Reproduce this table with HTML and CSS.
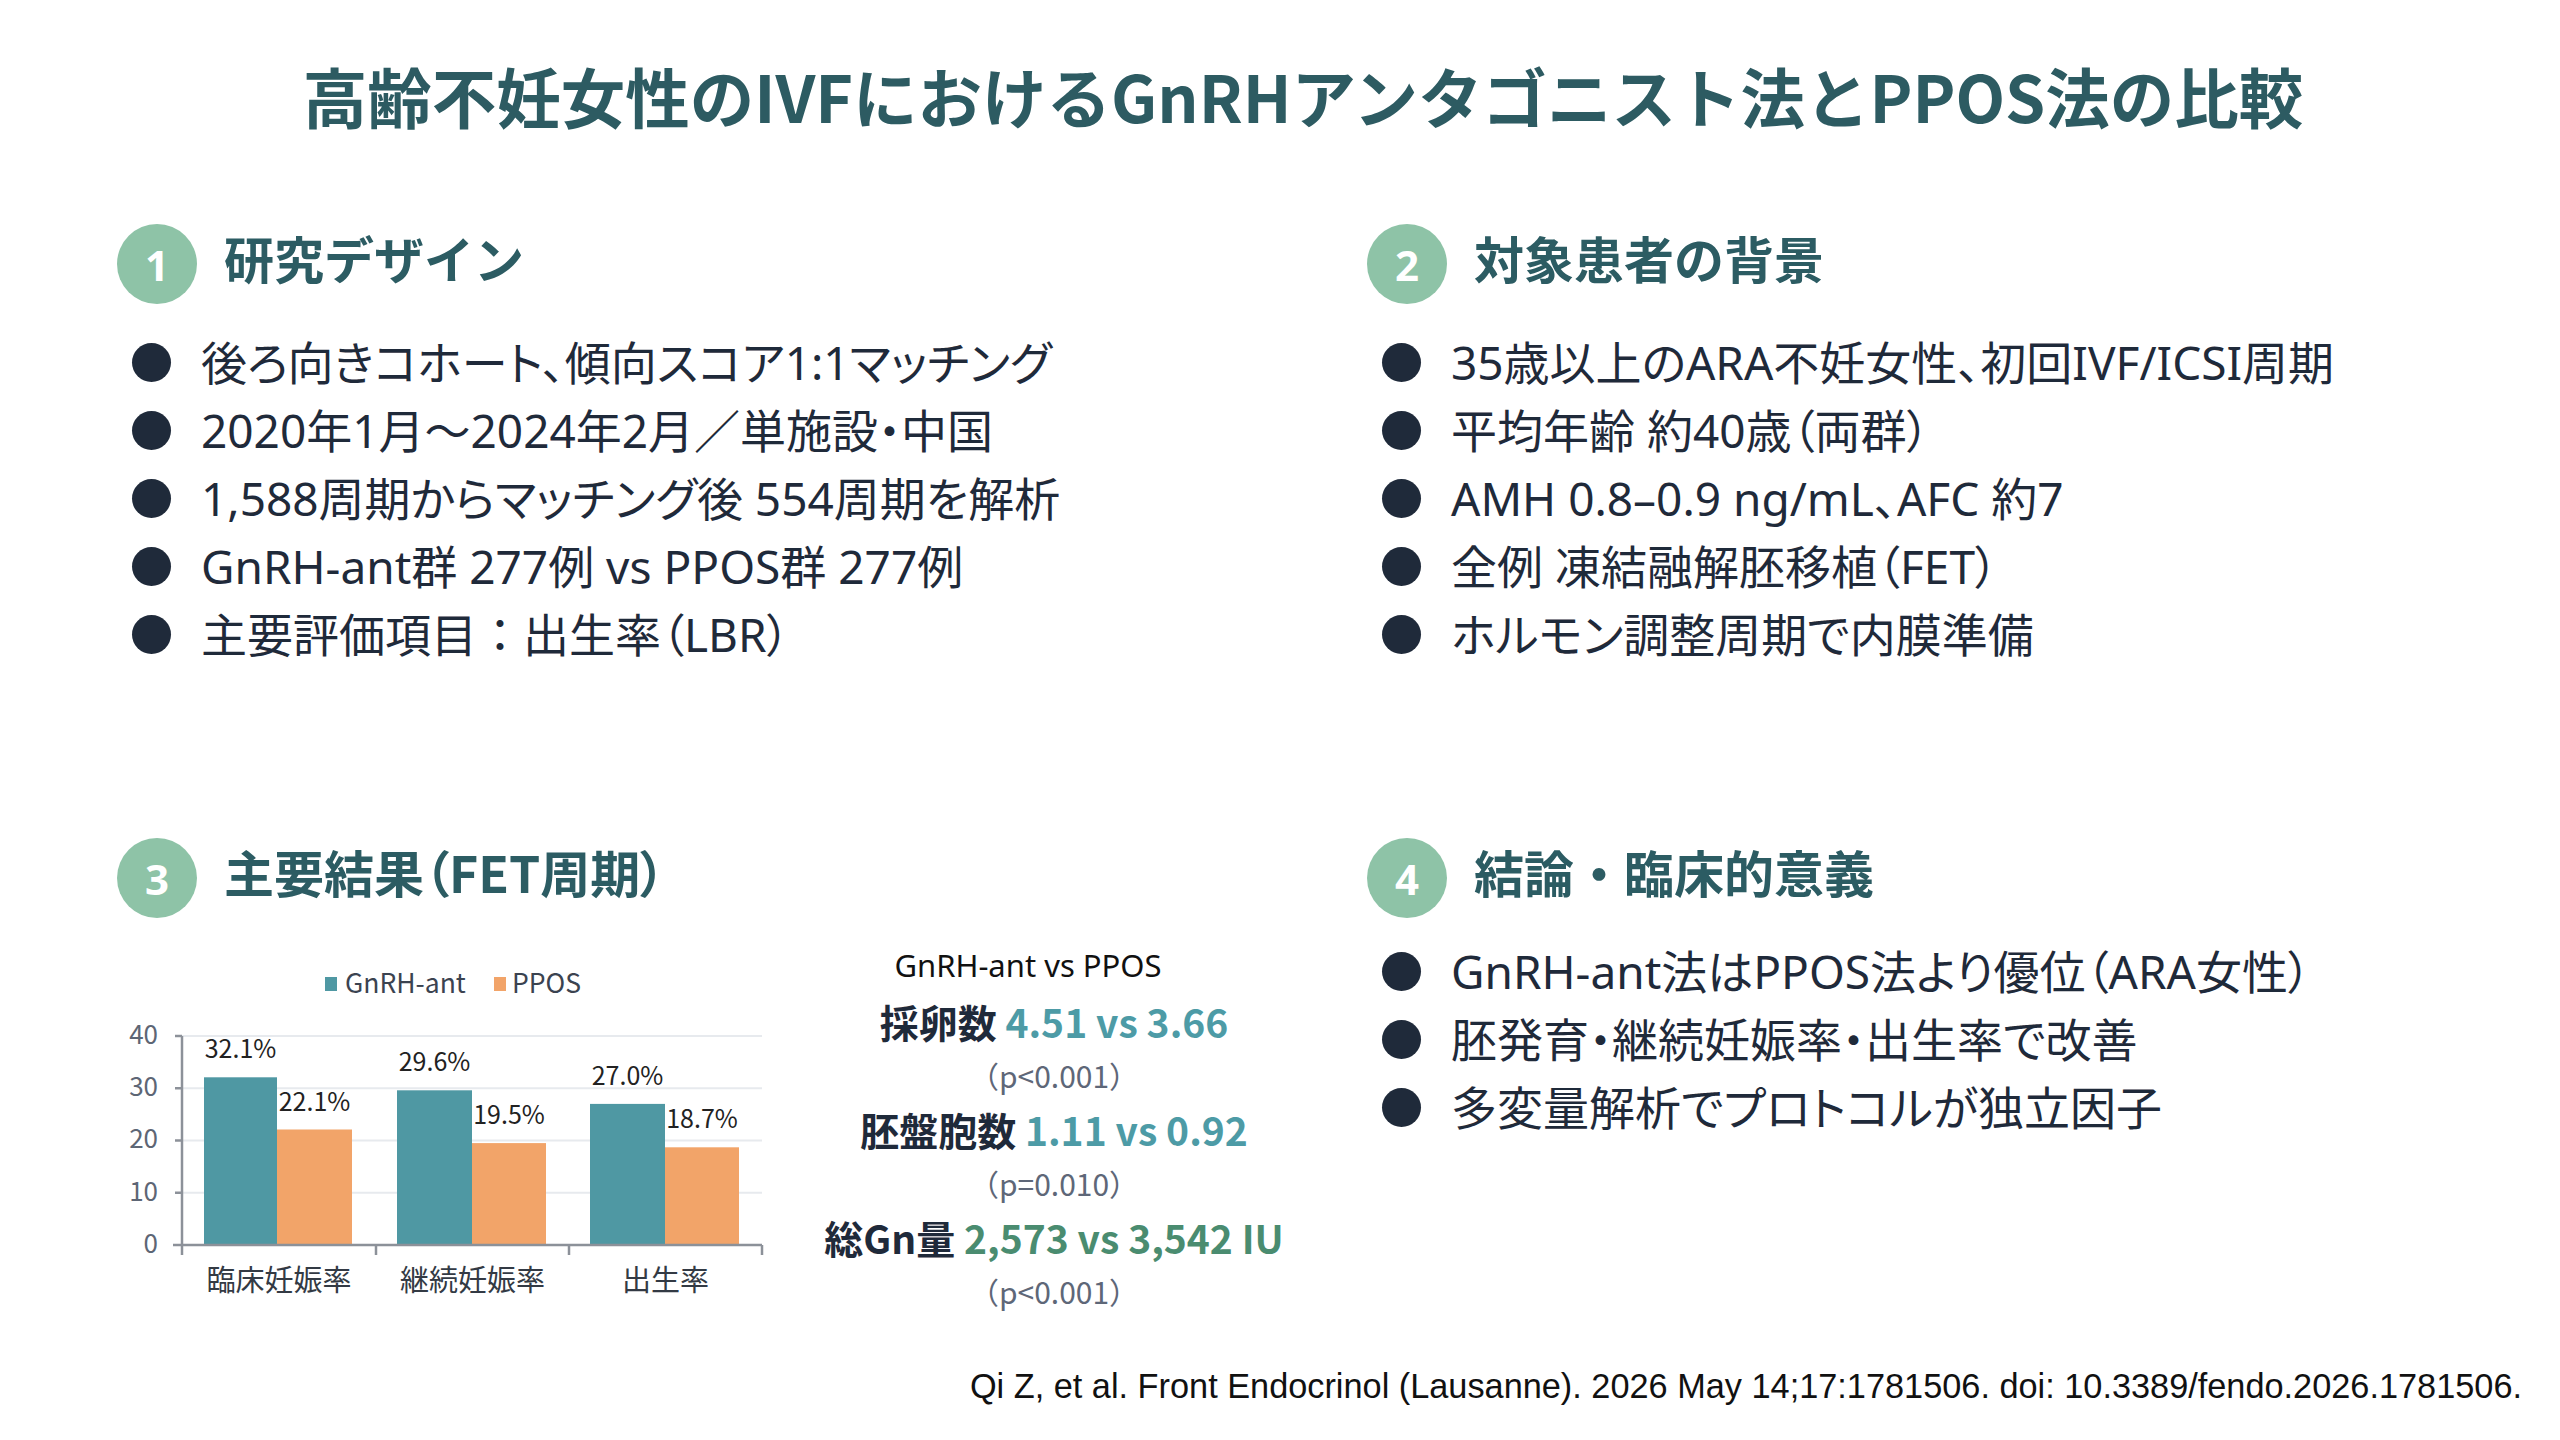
FILE: index.html
```html
<!DOCTYPE html>
<html lang="ja">
<head>
<meta charset="utf-8">
<title>高齢不妊女性のIVFにおけるGnRHアンタゴニスト法とPPOS法の比較</title>
<link rel="stylesheet" href="styles.css">
</head>
<body>
<div class="slide">
  <h1 class="title">高齢不妊女性のIVFにおけるGnRHアンタゴニスト法とPPOS法の比較</h1>

  <div class="grid">
    <section class="sec">
      <div class="sec-head"><span class="num">1</span><h2>研究デザイン</h2></div>
      <ul class="list">
        <li><span class="dot"></span>後ろ向きコホート、傾向スコア1:1マッチング</li>
        <li><span class="dot"></span>2020年1月～2024年2月／単施設・中国</li>
        <li><span class="dot"></span>1,588周期からマッチング後 554周期を解析</li>
        <li><span class="dot"></span>GnRH-ant群 277例 vs PPOS群 277例</li>
        <li><span class="dot"></span>主要評価項目<span class="fw">：</span>出生率（LBR）</li>
      </ul>
    </section>

    <section class="sec">
      <div class="sec-head"><span class="num">2</span><h2>対象患者の背景</h2></div>
      <ul class="list">
        <li><span class="dot"></span>35歳以上のARA不妊女性、初回IVF/ICSI周期</li>
        <li><span class="dot"></span>平均年齢 約40歳（両群）</li>
        <li><span class="dot"></span>AMH 0.8–0.9 ng/mL、AFC 約7</li>
        <li><span class="dot"></span>全例 凍結融解胚移植（FET）</li>
        <li><span class="dot"></span>ホルモン調整周期で内膜準備</li>
      </ul>
    </section>

    <section class="sec">
      <div class="sec-head"><span class="num">3</span><h2 class="palt">主要結果（FET周期）</h2></div>
      <div class="results">
        <svg class="chart" width="700" height="360" viewBox="0 0 700 360">
          <rect x="208" y="28" width="12" height="14" fill="#4f98a3"/>
          <text class="legend" x="228" y="44">GnRH-ant</text>
          <rect x="377" y="28" width="12" height="14" fill="#f2a469"/>
          <text class="legend" x="395" y="44">PPOS</text>

          <g stroke="#e7eaee" stroke-width="2">
            <line x1="65" y1="87" x2="645" y2="87"/>
            <line x1="65" y1="139.25" x2="645" y2="139.25"/>
            <line x1="65" y1="191.5" x2="645" y2="191.5"/>
            <line x1="65" y1="243.75" x2="645" y2="243.75"/>
          </g>

          <g class="ylab">
            <text x="41" y="95">40</text>
            <text x="41" y="147">30</text>
            <text x="41" y="199">20</text>
            <text x="41" y="252">10</text>
            <text x="41" y="304">0</text>
          </g>

          <rect x="87" y="128.3" width="73" height="167.7" fill="#4f98a3"/>
          <rect x="160" y="180.5" width="75" height="115.5" fill="#f2a469"/>
          <rect x="280" y="141.3" width="75" height="154.7" fill="#4f98a3"/>
          <rect x="355" y="194.1" width="74" height="101.9" fill="#f2a469"/>
          <rect x="473" y="154.9" width="75" height="141.1" fill="#4f98a3"/>
          <rect x="548" y="198.3" width="74" height="97.7" fill="#f2a469"/>

          <g stroke="#8c9199" stroke-width="2.5">
            <line x1="65" y1="87" x2="65" y2="306"/>
            <line x1="56" y1="296" x2="645" y2="296"/>
            <line x1="58" y1="87" x2="65" y2="87"/>
            <line x1="58" y1="139.25" x2="65" y2="139.25"/>
            <line x1="58" y1="191.5" x2="65" y2="191.5"/>
            <line x1="58" y1="243.75" x2="65" y2="243.75"/>
            <line x1="259" y1="296" x2="259" y2="306"/>
            <line x1="452" y1="296" x2="452" y2="306"/>
            <line x1="645" y1="296" x2="645" y2="306"/>
          </g>

          <g class="vlab">
            <text x="123.5" y="109">32.1%</text>
            <text x="197.5" y="161.5">22.1%</text>
            <text x="317.5" y="122">29.6%</text>
            <text x="392" y="175">19.5%</text>
            <text x="510.5" y="136">27.0%</text>
            <text x="585" y="179">18.7%</text>
          </g>

          <g class="xlab">
            <text x="162" y="342">臨床妊娠率</text>
            <text x="355.5" y="342">継続妊娠率</text>
            <text x="548.5" y="342">出生率</text>
          </g>
        </svg>

        <div class="stats">
          <div class="stats-label">GnRH-ant vs PPOS</div>
          <div class="stat"><b>採卵数</b> <span class="v teal">4.51 vs 3.66</span></div>
          <div class="pval">（p&lt;0.001）</div>
          <div class="stat"><b>胚盤胞数</b> <span class="v teal">1.11 vs 0.92</span></div>
          <div class="pval">（p=0.010）</div>
          <div class="stat"><b>総Gn量</b> <span class="v green">2,573 vs 3,542 IU</span></div>
          <div class="pval">（p&lt;0.001）</div>
        </div>
      </div>
    </section>

    <section class="sec">
      <div class="sec-head"><span class="num">4</span><h2>結論・臨床的意義</h2></div>
      <ul class="list list4">
        <li><span class="dot"></span>GnRH-ant法はPPOS法より優位（ARA女性）</li>
        <li><span class="dot"></span>胚発育・継続妊娠率・出生率で改善</li>
        <li><span class="dot"></span>多変量解析でプロトコルが独立因子</li>
      </ul>
    </section>
  </div>

  <p class="cite">Qi Z, et al. Front Endocrinol (Lausanne). 2026 May 14;17:1781506. doi: 10.3389/fendo.2026.1781506.</p>
</div>
</body>
</html>
```

FILE: styles.css
```css
* { box-sizing: border-box; }

html, body {
  margin: 0;
  padding: 0;
  background: #ffffff;
}

body {
  width: 2560px;
  height: 1440px;
  overflow: hidden;
  font-family: "Noto Sans CJK JP", "Noto Sans", sans-serif;
  color: #1f2a3a;
}

.slide {
  width: 2560px;
  height: 1440px;
  display: flex;
  flex-direction: column;
  padding: 55px 0 34px 0;
}

.title {
  margin: 0;
  padding-left: 46px;
  text-align: center;
  font-size: 64.5px;
  line-height: 80px;
  font-weight: 700;
  color: #2d5b62;
}

.grid {
  margin-top: 89px;
  display: grid;
  grid-template-columns: 1250px 1fr;
  grid-template-rows: 614px auto;
  padding-left: 117px;
}

.sec-head {
  display: flex;
  align-items: center;
  height: 80px;
}

.num {
  width: 80px;
  height: 80px;
  border-radius: 50%;
  background: #8ec3a7;
  color: #ffffff;
  font-family: "Noto Sans", "Noto Sans CJK JP", sans-serif;
  font-weight: 700;
  font-size: 42px;
  display: flex;
  align-items: center;
  justify-content: center;
  flex-shrink: 0;
}

.sec-head h2 {
  margin: 0 0 0 27px;
  padding-bottom: 14px;
  font-size: 50px;
  line-height: 66px;
  font-weight: 700;
  color: #2c5c63;
}

.palt {
  font-feature-settings: "palt";
}

.list {
  list-style: none;
  margin: 24px 0 0 0;
  padding: 0;
}

.list4 { margin-top: 19px; }

.list li {
  display: flex;
  align-items: center;
  height: 68px;
  font-family: "Noto Sans", "Noto Sans CJK JP", sans-serif;
  font-feature-settings: "palt";
  font-size: 46px;
  line-height: 68px;
  color: #1f2a3a;
  white-space: nowrap;
}

.fw {
  font-feature-settings: normal;
}

.dot {
  width: 39px;
  height: 39px;
  border-radius: 50%;
  background: #1f2a3a;
  margin-left: 15px;
  margin-right: 30px;
  flex-shrink: 0;
}

.results {
  display: flex;
  align-items: flex-start;
  margin-top: 29px;
}

.chart {
  display: block;
  flex-shrink: 0;
  margin-top: 2px;
}

.chart text {
  font-family: "Noto Sans CJK JP", "Noto Sans", sans-serif;
}

.legend {
  font-size: 26.5px;
  fill: #3b4350;
}

.ylab text {
  font-size: 26px;
  fill: #5d6675;
  text-anchor: end;
}

.vlab text {
  font-size: 25px;
  fill: #222222;
  text-anchor: middle;
}

.xlab text {
  font-size: 29px;
  fill: #333a44;
  text-anchor: middle;
}

.stats {
  width: 420px;
  margin-left: 27px;
  display: flex;
  flex-direction: column;
  align-items: center;
  text-align: center;
}

.stats-label {
  font-family: "Noto Sans", "Noto Sans CJK JP", sans-serif;
  font-size: 31px;
  line-height: 36px;
  color: #111111;
  margin-bottom: 11px;
  padding-right: 52px;
}

.stat {
  font-size: 39px;
  line-height: 54px;
  white-space: nowrap;
}

.stat b {
  font-weight: 700;
  color: #1f2a3a;
}

.stat .v {
  font-weight: 700;
}

.teal { color: #4d9ba6; }
.green { color: #4a8c70; }

.pval {
  font-size: 30px;
  line-height: 54px;
  color: #5e6778;
}

.cite {
  margin: auto 38px 0 0;
  text-align: right;
  font-family: "Liberation Sans", Arial, sans-serif;
  font-size: 34.3px;
  line-height: 40px;
  color: #111111;
}
```
